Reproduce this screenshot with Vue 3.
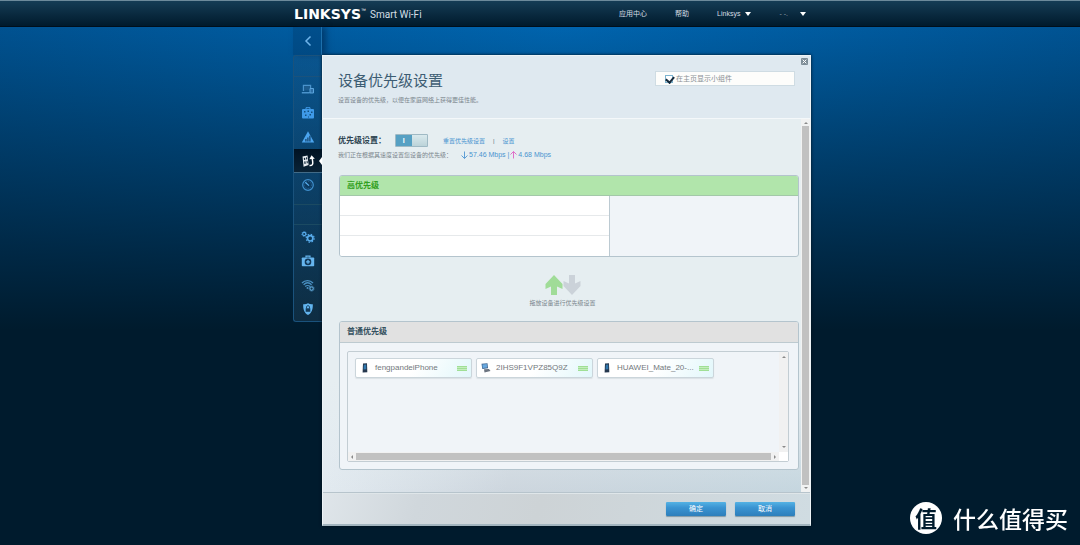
<script setup>
import { ref } from 'vue'

const showWidget = ref(true)
const enabled = ref(true)

const appMenu = [
  { id: 'devices', label: '设备列表' },
  { id: 'guest', label: '访客访问' },
  { id: 'parental', label: '家长控制' },
  { id: 'priority', label: '设备优先级设置', active: true },
  { id: 'speed', label: '速度测试' },
]
const settingsMenu = [
  { id: 'gears', label: '连接' },
  { id: 'trouble', label: '故障排除' },
  { id: 'wifi', label: '无线' },
  { id: 'shield', label: '安全' },
]
const devices = [
  { name: 'fengpandeiPhone', type: 'phone' },
  { name: '2IHS9F1VPZ85Q9Z', type: 'pc' },
  { name: 'HUAWEI_Mate_20-...', type: 'phone' },
]
</script>

<template>
  <div class="page">
    <header class="topbar">
      <div class="brand">
        <span class="logo">LINKSYS</span><span class="tm">™</span>
        <span class="product">Smart Wi-Fi</span>
      </div>
      <nav class="topnav">
        <a href="#">应用中心</a>
        <a href="#">帮助</a>
        <button type="button" class="drop">Linksys <i class="caret"></i></button>
        <button type="button" class="drop dim">- -. <i class="caret"></i></button>
      </nav>
    </header>

    <div class="stage">
      <aside class="side">
        <button type="button" class="back" aria-label="返回">
          <svg viewBox="0 0 8 12"><path d="M6.500 1.500 2 6l4.500 4.500" fill="none" stroke="#6fb4ea" stroke-width="1.500" /></svg>
        </button>
        <nav class="menu">
          <div class="blank"></div>
          <a v-for="m in appMenu" :key="m.id" href="#" class="item" :class="{ active: m.active }" :aria-label="m.label">
            <svg v-if="m.id === 'devices'" viewBox="0 0 14 14">
              <path d="M2.500 9V3.500h7V6M.8 10.800h8" fill="none" stroke="#4a93cc" stroke-width="1.400" />
              <path d="M3 4h6v4.500H3z" fill="#1d5c8e" />
              <path d="M9 6.500h3.500V11H9z" fill="#2c6ea6" stroke="#5aa4dc" />
            </svg>
            <svg v-else-if="m.id === 'guest'" viewBox="0 0 14 14">
              <path d="M5 3V1.700h4V3" fill="none" stroke="#3f9ae8" />
              <rect x="1" y="3" width="12" height="9.500" rx="1" fill="#3f9ae8" />
              <path d="M3 5h1.500v1.500H3zM6.500 4.500H8V6H6.500zM10 5.500h1.500V7H10zM4 8.500h1.500V10H4zM8.500 8H10v1.500H8.500zM7 10.500h1v1H7z" fill="#14507f" />
            </svg>
            <svg v-else-if="m.id === 'parental'" viewBox="0 0 14 14">
              <path d="M7 1.200 13.200 12.500H.8z" fill="#4ba4ee" />
              <path d="M4.300 9h1.200v2.500H4.300zM6.300 7.500h1.200v4H6.300zM8.300 5.700h1.200v5.800H8.300z" fill="#123f66" />
            </svg>
            <svg v-else-if="m.id === 'priority'" viewBox="0 0 14 14">
              <path d="m1.500 2.600 5-1.100L7.600 11l-5 1.800z" fill="#e8eef2" />
              <path d="m2.800 4 1.300-.3.2 2-1.300.3zM5 3.500l1-.2.3 2-1.100.3zM3.200 7.500l1.200-.3.300 2.500-1.200.4zM5.600 6.900l.9-.2.300 2.400-1 .3z" fill="#0b2234" />
              <path d="M8.500 11.500c3 .2 3.500-1.500 3.200-3.500L11.200 4" fill="none" stroke="#fff" stroke-width="1.500" />
              <path d="m8.300 5.300 2.300-4 3.200 3.400z" fill="#fff" />
            </svg>
            <svg v-else viewBox="0 0 14 14">
              <circle cx="7" cy="7" r="5.300" fill="#0d3b61" stroke="#3f8fcd" stroke-width="1.200" />
              <circle cx="7" cy="7" r="3.500" fill="none" stroke="#2c6ea6" stroke-width=".8" stroke-dasharray="1 1" />
              <path d="M4.300 4.300 8 7.600" stroke="#5ab0f0" stroke-width="1.200" />
            </svg>
            <i v-if="m.active" class="pointer"></i>
          </a>
          <div class="gap"></div>
          <div class="blank lined"></div>
          <a v-for="m in settingsMenu" :key="m.id" href="#" class="item" :aria-label="m.label">
            <svg v-if="m.id === 'gears'" viewBox="0 0 14 14">
              <g fill="none" stroke="#58acec">
                <circle cx="3.200" cy="4" r="1.600" stroke-width="1.100" />
                <circle cx="3.200" cy="4" r="2.400" stroke-width=".9" stroke-dasharray=".95 .95" />
                <circle cx="9.200" cy="8.300" r="2.700" stroke-width="1.700" />
                <circle cx="9.200" cy="8.300" r="4" stroke-width="1.100" stroke-dasharray="1.570 1.570" />
              </g>
            </svg>
            <svg v-else-if="m.id === 'trouble'" viewBox="0 0 14 14">
              <path d="M5 3.500V2.200h4v1.300" fill="none" stroke="#66b5ee" stroke-width="1.200" />
              <rect x=".8" y="3.500" width="12.400" height="8.800" rx=".8" fill="#66b5ee" />
              <circle cx="7" cy="7.900" r="3.300" fill="#12395a" />
              <path d="M7 6v3.800M5.100 7.900h3.800" stroke="#66b5ee" stroke-width="1.300" />
            </svg>
            <svg v-else-if="m.id === 'wifi'" viewBox="0 0 14 14">
              <g fill="none" stroke="#4a90c2">
                <path d="M1 5c3-3.300 8-3.300 11 0M2.600 6.800c2.400-2.400 5.600-2.400 8 0M4.200 8.500c1.300-1.300 3.500-1.300 4.800 0" stroke-width="1.300" />
                <circle cx="10.600" cy="10.600" r="1.700" stroke="#5a9fce" stroke-width="1.200" />
                <circle cx="10.600" cy="10.600" r="2.600" stroke="#5a9fce" stroke-width=".7" stroke-dasharray="1 1" />
              </g>
              <circle cx="6.500" cy="10" r="1" fill="#4a90c2" />
            </svg>
            <svg v-else viewBox="0 0 14 14">
              <path d="M2.200 2.200C4 2.500 5.500 2 7 1.200c1.500.8 3 1.300 4.800 1 .2 5-1 8.800-4.800 10.800C3.200 11 2 7.200 2.200 2.200z" fill="#62b4ee" />
              <path d="M5.500 6.500V5.200c0-2 3-2 3 0v1.300" fill="none" stroke="#123a5a" />
              <path d="M4.700 6.300h4.600v3.500H4.700z" fill="#123a5a" />
            </svg>
          </a>
        </nav>
      </aside>

      <main class="panel">
        <header class="head">
          <div>
            <h1>设备优先级设置</h1>
            <p class="small">设置设备的优先级，以便在家庭网络上获得更佳性能。</p>
          </div>
          <label class="widget">
            <input v-model="showWidget" type="checkbox" />
            <span>在主页显示小组件</span>
          </label>
          <button type="button" class="close" aria-label="关闭">
            <svg viewBox="0 0 7 7"><rect width="7" height="7" rx="1" fill="#7e8e98" /><path d="m1.700 1.700 3.600 3.600m0-3.600L1.700 5.300" stroke="#fff" /></svg>
          </button>
        </header>

        <div class="body">
          <div class="content">
            <div class="row">
              <span class="label">优先级设置：</span>
              <button type="button" class="toggle" role="switch" :aria-checked="enabled" aria-label="优先级设置" @click="enabled = !enabled">
                <span class="on">I</span><span class="knob"></span>
              </button>
              <a href="#">重置优先级设置</a><span class="bar">|</span><a href="#">设置</a>
            </div>
            <p class="speed">
              <span class="small">我们正在根据其速度设置您设备的优先级：</span>
              <svg viewBox="0 0 7 8"><path d="M3.500.5v7M.5 4.500l3 3 3-3" fill="none" stroke="#5f9fd6" /></svg>
              <span>57.46 Mbps |</span>
              <svg viewBox="0 0 7 8"><path d="M3.500 7.500v-7M.5 3.500l3-3 3 3" fill="none" stroke="#e070c8" /></svg>
              <span>4.68 Mbps</span>
            </p>

            <section class="box high">
              <h2>高优先级</h2>
              <div class="slots">
                <ul><li></li><li></li><li></li></ul>
                <div></div>
              </div>
            </section>

            <div class="hint">
              <svg viewBox="0 0 36 20">
                <path d="m9 0 8.500 9v5L12 11.500V20H6v-8.500L.5 14V9z" fill="#a0dc98" />
                <path d="m27 20 8.500-9V6L30 8.500V0h-6v8.500L18.500 6v5z" fill="#cbd2d9" />
              </svg>
              <p class="small">拖放设备进行优先级设置</p>
            </div>

            <section class="box normal">
              <h2>普通优先级</h2>
              <div class="pool">
                <div class="view">
                  <ul class="chips">
                    <li v-for="d in devices" :key="d.name">
                      <svg v-if="d.type === 'phone'" viewBox="0 0 10 10"><path d="m3 .6 4-.3.300 8.900-4.700.4z" fill="#26384e" /><path d="m3.900 1.700 2.300-.2.100 4.700-2.800.2z" fill="#2f77ae" /></svg>
                      <svg v-else viewBox="0 0 10 10"><path d="m.5.7 6-.4.500 5-5.700.6z" fill="#3d6491" /><path d="m1.300 1.400 4.500-.3.300 3.400-4.300.5z" fill="#69a9df" /><path d="m3 6.300 5-.3 1.500 2-6 1.500z" fill="#6c7480" /></svg>
                      <span>{{ d.name }}</span>
                      <i class="grip"></i>
                    </li>
                  </ul>
                  <div class="vbar" aria-hidden="true"><i class="up"></i><i class="down"></i></div>
                </div>
                <div class="hbar" aria-hidden="true"><i class="left"></i><b></b><i class="right"></i><s></s></div>
              </div>
            </section>
          </div>
          <div class="scroll" aria-hidden="true"><i class="up"></i><b></b><i class="down"></i></div>
        </div>

        <footer class="foot">
          <button type="button">确定</button>
          <button type="button">取消</button>
        </footer>
      </main>
    </div>

    <div class="mark"><span class="seal">值</span><span>什么值得买</span></div>
  </div>
</template>

<style>
body { background: #001b2d; }
</style>

<style scoped>
* { box-sizing: border-box; }
h1, h2, p, ul { margin: 0; padding: 0; }
ul { list-style: none; }
button { padding: 0; border: 0; background: none; color: inherit; font: inherit; }
svg { display: block; flex: none; }
a { color: #4a94d0; text-decoration: none; }

.page {
  min-height: 100vh;
  font: 7px/10px "Liberation Sans", "Noto Sans CJK SC", sans-serif;
  color: #7b868d;
  background:
    linear-gradient(to bottom, rgba(0, 27, 45, 0) 27px, rgba(0, 27, 45, .35) 130px, #001b2d 330px),
    radial-gradient(ellipse 60% 420px at 52% 27px, #0064ae, #004f8c);
}
.topbar, .stage {
  display: grid;
  grid-template-columns: minmax(0, 293fr) minmax(29px, 29fr) minmax(0, 489fr) minmax(0, 269fr);
}
.topbar {
  height: 27px;
  border-top: 1px solid #6d8a9b;
  border-bottom: 1px solid #000f1c;
  background: linear-gradient(#153c55, #001a2c);
}
.brand { grid-column: 2 / 4; grid-row: 1; display: flex; align-items: center; color: #fff; white-space: nowrap; }
.logo { padding-left: 1px; font: bold 14px/25px "DejaVu Sans", sans-serif; }
.tm { align-self: flex-start; font-size: 5px; line-height: 18px; }
.product { margin-left: 4px; padding-top: 2px; font: 10px/24px Roboto, sans-serif; color: #d5dfe6; }
.topnav { grid-column: 3 / 4; grid-row: 1; display: flex; align-items: center; justify-content: flex-end; gap: 28px; padding-right: 5px; color: #d5dde3; }
.topnav a { color: inherit; }
.drop { display: flex; align-items: center; gap: 5px; }
.drop.dim { gap: 12px; color: #8c9ca8; }
.caret { border: 3px solid transparent; border-top: 4px solid #fff; border-bottom: 0; }

.side { grid-column: 2; }
.back { display: grid; place-items: center; width: 100%; height: 28px; padding-left: 2px; border-right: 1px solid #1d70ad; background: rgba(0, 40, 80, .25); box-shadow: 4px 0 6px rgba(0, 30, 65, .5); }
.back svg { width: 8px; height: 12px; }
.menu { border: 1px solid #1a527c; border-right: 0; border-radius: 3px 0 0 3px; background: linear-gradient(rgba(30, 85, 130, .3), rgba(40, 75, 100, .35)); }
.blank { height: 21px; border-bottom: 1px solid #1a527c; }
.blank.lined { border-top: 1px solid #1b4a62; border-color: #1b4a62; }
.gap { height: 7px; }
.item { position: relative; display: grid; place-items: center; height: 24px; }
.item svg { width: 14px; height: 14px; }
.item.active { border-bottom: 1px solid #426b87; background: linear-gradient(#001222, #0a2336); }
.pointer { position: absolute; right: 0; top: 8px; border: 4px solid transparent; border-right: 3px solid #fff; border-left: 0; }

.panel { display: flex; flex-direction: column; margin-top: 28px; border: 1px solid #edf3f6; border-bottom: 2px solid #a2b4be; box-shadow: 0 0 3px #00101c; background: linear-gradient(105deg, #e9eff3 8%, #d0d7dc 35%, #cdd3d6 55%, #d0dce2); }
.head { position: relative; display: flex; justify-content: space-between; height: 63px; padding: 12px 15px; background: #dfe9f0; border-bottom: 1px solid #f4f8fa; }
h1 { font: 15px/25px "Liberation Sans", "Noto Sans CJK SC", sans-serif; color: #3d5d73; }
.head p { margin-top: 2px; }
.small { font-size: 6px; line-height: 10px; }
.widget { display: flex; align-items: center; gap: 3px; width: 140px; height: 15px; margin-top: 3px; padding-left: 9px; border: 1px solid #cfdce3; background: #fdfdfb; color: #8a9195; }
.widget input { appearance: none; width: 8px; height: 8px; margin: 0; border: 1px solid #7cb4d0; background: #fff; }
.widget input:checked::before { content: ""; display: block; width: 4px; height: 6px; margin: -1px 0 0 1px; border: solid #15293a; border-width: 0 2px 2px 0; transform: rotate(40deg); }
.close { position: absolute; top: 2px; right: 2px; }
.close svg { width: 7px; height: 7px; }

.body { display: flex; background: linear-gradient(to bottom, #e6eef1 70%, rgba(230, 238, 241, 0)), linear-gradient(100deg, #e2eaf0 12%, #cdd6de 45%, #c5d6df); border-bottom: 1px solid #b7c4cc; }
.content { flex: 1; min-width: 0; padding: 15px 2px 22px 15px; }
.scroll { display: flex; flex-direction: column; align-items: center; gap: 2px; width: 9px; padding: 3px 0; background: #f1f2f2; }
.scroll b { flex: 1; width: 7px; background: #c1c1c1; }
.up, .down, .left, .right { border: 2px solid transparent; }
.up { border-top: 0; border-bottom-color: #8a8a8a; }
.down { border-bottom: 0; border-top-color: #8a8a8a; }
.left { border-left: 0; border-right-color: #8a8a8a; }
.right { border-right: 0; border-left-color: #8a8a8a; }

.row { display: flex; align-items: center; height: 13px; font-size: 6px; }
.label { width: 57px; font-size: 8px; font-weight: bold; color: #2f4552; white-space: nowrap; }
.toggle { display: flex; width: 33px; height: 13px; margin-right: 15px; border: 1px solid #9fb9c4; border-radius: 1px; background: #56a0c3; }
.toggle span { flex: 1; }
.on { font-size: 7px; line-height: 12px; font-weight: bold; color: #fff; text-align: center; }
.knob { background: linear-gradient(#d9e9ed, #bcd3d9); }
.bar { padding: 0 8px; color: #5f6e78; }
.speed { display: flex; align-items: center; gap: 1px; margin-top: 3px; color: #4a94d0; white-space: nowrap; }
.speed .small { margin-right: 8px; color: #7b868d; }
.speed svg { width: 7px; height: 8px; }

.box { margin-left: 1px; border: 1px solid #b4c4cd; border-radius: 3px; background: #f0f4f8; overflow: hidden; }
.box h2 { height: 21px; padding-left: 7px; border-bottom: 1px solid #bdcad0; font-size: 8px; line-height: 19px; }
.high { margin-top: 15px; }
.high h2 { height: 20px; background: #b1e5ab; color: #31a021; border-bottom-color: #a3c8a8; }
.slots { display: grid; grid-template-columns: 270fr 188fr; }
.slots ul { background: #fff; border-right: 1px solid #bccad2; }
.slots li { height: 20px; border-bottom: 1px solid #e6e9eb; }
.slots li:last-child { border-bottom: 0; }
.hint { display: flex; flex-direction: column; align-items: center; margin-top: 18px; padding-right: 12px; }
.hint svg { width: 36px; height: 20px; }
.hint p { margin-top: 3px; }
.normal { margin-top: 13px; }
.normal h2 { background: #e1e1e1; color: #34505e; }
.pool { margin: 8px 9px 7px 7px; border: 1px solid #c3cdd3; border-radius: 2px; }
.view { display: flex; justify-content: space-between; min-height: 100px; }
.chips { display: flex; align-items: flex-start; flex-wrap: wrap; flex: 1; gap: 4px; padding: 6px 0 0 7px; }
.chips li { display: flex; align-items: center; width: 28%; max-width: 117px; height: 20px; padding: 0 4px; border: 1px solid #cbd5db; border-radius: 2px; background: linear-gradient(120deg, #fff 50%, #e2f7fb); font-size: 8px; box-shadow: 0 1px 1px #dae1e5; color: #73787c; }
.chips svg { width: 10px; height: 10px; margin-right: 5px; }
.chips span { flex: 1; min-width: 0; white-space: nowrap; }
.grip { width: 10px; height: 5px; background: repeating-linear-gradient(#9fdf95 0 1px, #c4edbe 1px 2px); }
.vbar { display: flex; flex-direction: column; align-items: center; justify-content: space-between; width: 9px; padding: 4px 0; background: #f1f1f1; }
.hbar { display: flex; align-items: center; gap: 3px; height: 9px; padding-left: 3px; background: #f1f1f1; }
.hbar b { flex: 1; height: 7px; background: #c1c1c1; }
.hbar s { width: 9px; height: 9px; background: #fff; }

.foot { display: flex; justify-content: flex-end; gap: 9px; height: 31px; padding: 8px 15px; border-top: 1px solid #dfe6e9; }
.foot button { width: 60px; height: 14px; border-radius: 1px; background: linear-gradient(#54b2e4, #3a94d2 40%, #2d7fbb); color: #fff; box-shadow: 0 1px 1px #8199a7; }

.mark { position: fixed; right: 12px; bottom: 11px; display: flex; align-items: center; gap: 11px; color: #fff; font: 500 23px/32px "Noto Sans CJK SC", sans-serif; }
.seal { width: 32px; height: 32px; border-radius: 50%; background: #fff; color: #001b2d; font-size: 22px; line-height: 31px; font-weight: bold; text-align: center; }
</style>
